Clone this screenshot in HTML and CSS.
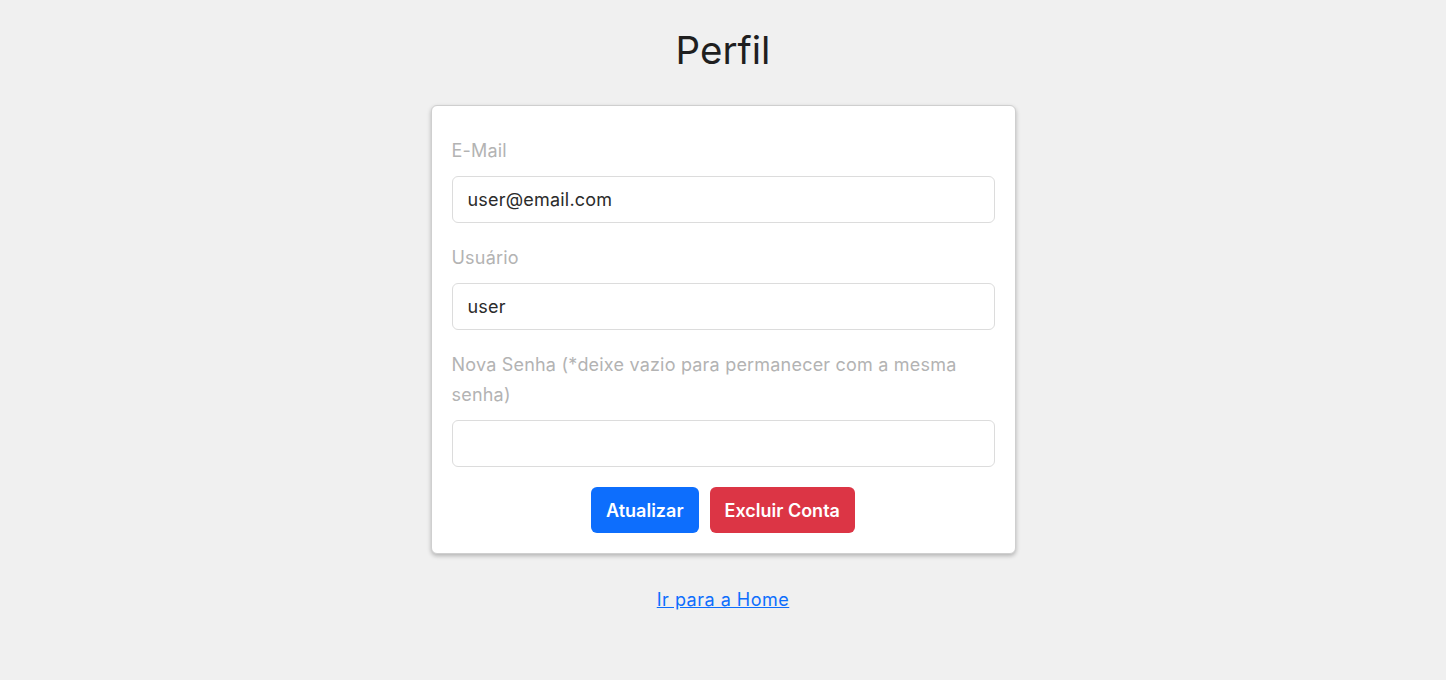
FILE: index.html
```html
<!DOCTYPE html>
<html lang="pt">
<head>
<meta charset="utf-8">
<title>Perfil</title>
<link rel="stylesheet" href="styles.css">
</head>
<body>
<main class="page">
  <h1 class="title">Perfil</h1>
  <form class="card">
    <div class="group">
      <label class="label" for="email">E-Mail</label>
      <input class="input" id="email" type="text" value="user@email.com">
    </div>
    <div class="group">
      <label class="label" for="user">Usuário</label>
      <input class="input" id="user" type="text" value="user">
    </div>
    <div class="group">
      <label class="label" for="pass">Nova Senha (*deixe vazio para permanecer com a mesma senha)</label>
      <input class="input" id="pass" type="password" value="">
    </div>
    <div class="actions">
      <button type="button" class="btn btn-primary">Atualizar</button>
      <button type="button" class="btn btn-danger">Excluir Conta</button>
    </div>
  </form>
  <a class="home-link" href="#">Ir para a Home</a>
</main>
</body>
</html>
```

FILE: styles.css
```css
* { box-sizing: border-box; }
html, body { margin: 0; padding: 0; }
body {
  background: #f0f0f0;
  font-family: Inter, "Noto Sans", sans-serif;
  color: #212529;
}
.page {
  display: flex;
  flex-direction: column;
  align-items: center;
}
.title {
  margin: 26px 0 0;
  font-size: 38.5px;
  font-weight: 400;
  line-height: 48px;
  color: #1f1f1f;
}
.card {
  margin-top: 31px;
  width: 585px;
  background: #fff;
  border: 1px solid #cfcfcf;
  border-radius: 6px;
  box-shadow: 0 2px 4px rgba(0,0,0,0.25);
  padding: 30px 20px 20px;
  display: flex;
  flex-direction: column;
  gap: 20px;
}
.group { display: flex; flex-direction: column; }
.label {
  font-size: 18px;
  line-height: 30px;
  letter-spacing: 0.2px;
  color: #b3b3b3;
  margin-bottom: 10px;
}
.input {
  height: 47px;
  border: 1px solid #dcdcdc;
  border-radius: 6px;
  padding: 0 15px;
  font-family: inherit;
  font-size: 18px;
  letter-spacing: 0.2px;
  color: #2b2b2b;
  background: #fff;
  outline: none;
}
.actions {
  display: flex;
  justify-content: center;
  gap: 11px;
}
.btn {
  height: 46px;
  border: none;
  border-radius: 6px;
  padding: 0 15px;
  font-family: inherit;
  font-size: 18px;
  font-weight: 600;
  color: #fff;
  cursor: pointer;
}
.btn-primary { background: #0d6efd; }
.btn-danger { background: #dc3545; }
.home-link {
  margin-top: 32px;
  font-size: 18px;
  line-height: 27px;
  letter-spacing: 0.5px;
  color: #0d6efd;
  text-decoration: underline;
}
```
